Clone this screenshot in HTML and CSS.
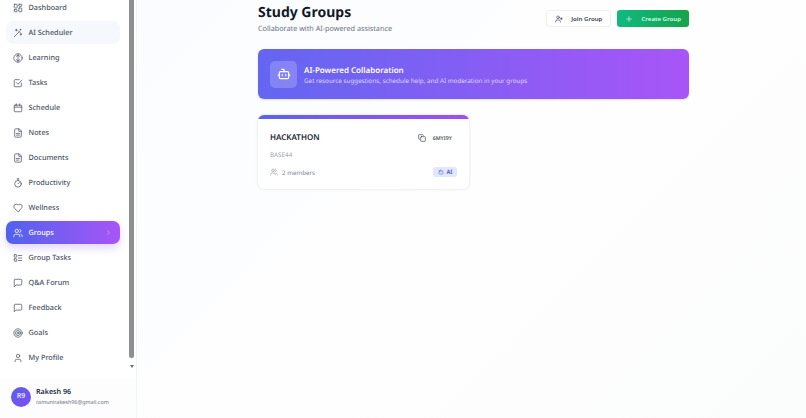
FILE: index.html
```html
<!DOCTYPE html>
<html lang="en">
<head>
    <meta charset="UTF-8">
    <meta name="viewport" content="width=device-width, initial-scale=1.0">
    <title>Study Groups</title>
    <link rel="stylesheet" href="styles.css">
</head>
<body>
    <div class="app">
        <aside class="sidebar">
            <div class="nav-wrap">
                <nav class="nav">
                    <a class="nav-item"><svg class="nav-icon" viewBox="0 0 24 24"><rect x="3" y="3" width="7" height="9" rx="1"/><rect x="14" y="3" width="7" height="5" rx="1"/><rect x="14" y="12" width="7" height="9" rx="1"/><rect x="3" y="16" width="7" height="5" rx="1"/></svg>Dashboard</a>
                    <a class="nav-item soft"><svg class="nav-icon" viewBox="0 0 24 24"><path d="M3 21 15 9"/><path d="m13 7 4 4"/><path d="M8 3v4M6 5h4M19 13v4M17 15h4M18 3v2M17 4h2"/></svg>AI Scheduler</a>
                    <a class="nav-item"><svg class="nav-icon" viewBox="0 0 24 24"><circle cx="12" cy="12" r="10"/><path d="M12 2v20M8 8l4-3 4 3M8 16l4 3 4-3"/></svg>Learning</a>
                    <a class="nav-item"><svg class="nav-icon" viewBox="0 0 24 24"><path d="M20 12v7a2 2 0 0 1-2 2H5a2 2 0 0 1-2-2V6a2 2 0 0 1 2-2h10"/><path d="m8 11 4 4 9-10"/></svg>Tasks</a>
                    <a class="nav-item"><svg class="nav-icon" viewBox="0 0 24 24"><rect x="3" y="5" width="18" height="16" rx="2"/><path d="M8 2v5M16 2v5M3 10h18"/></svg>Schedule</a>
                    <a class="nav-item"><svg class="nav-icon" viewBox="0 0 24 24"><path d="M14 2H6a2 2 0 0 0-2 2v16a2 2 0 0 0 2 2h12a2 2 0 0 0 2-2V8z"/><path d="M14 2v6h6M8 13h8M8 17h8"/></svg>Notes</a>
                    <a class="nav-item"><svg class="nav-icon" viewBox="0 0 24 24"><path d="M14 2H6a2 2 0 0 0-2 2v16a2 2 0 0 0 2 2h12a2 2 0 0 0 2-2V8z"/><path d="M14 2v6h6M8 13h8M8 17h6"/></svg>Documents</a>
                    <a class="nav-item"><svg class="nav-icon" viewBox="0 0 24 24"><circle cx="12" cy="14" r="8"/><path d="M10 2h4M12 14l3-3M12 2v4"/></svg>Productivity</a>
                    <a class="nav-item"><svg class="nav-icon" viewBox="0 0 24 24"><path d="M19 14c1.500-1.500 3-3.200 3-5.500A5.500 5.500 0 0 0 16.500 3c-1.800 0-3 .5-4.500 2-1.500-1.500-2.700-2-4.500-2A5.500 5.500 0 0 0 2 8.500c0 2.300 1.500 4 3 5.500l7 7z"/></svg>Wellness</a>
                    <a class="nav-item active"><svg class="nav-icon" viewBox="0 0 24 24"><path d="M16 21v-2a4 4 0 0 0-4-4H6a4 4 0 0 0-4 4v2"/><circle cx="9" cy="7" r="4"/><path d="M22 21v-2a4 4 0 0 0-3-3.900M16 3.100a4 4 0 0 1 0 7.800"/></svg>Groups<svg class="nav-chevron" viewBox="0 0 24 24"><path d="m9 6 6 6-6 6"/></svg></a>
                    <a class="nav-item"><svg class="nav-icon" viewBox="0 0 24 24"><rect x="3" y="4" width="6" height="6" rx="1"/><rect x="3" y="14" width="6" height="6" rx="1"/><path d="M13 6h8M13 12h8M13 18h8"/></svg>Group Tasks</a>
                    <a class="nav-item"><svg class="nav-icon" viewBox="0 0 24 24"><path d="M21 15a2 2 0 0 1-2 2H7l-4 4V5a2 2 0 0 1 2-2h14a2 2 0 0 1 2 2z"/></svg>Q&amp;A Forum</a>
                    <a class="nav-item"><svg class="nav-icon" viewBox="0 0 24 24"><path d="M21 15a2 2 0 0 1-2 2H7l-4 4V5a2 2 0 0 1 2-2h14a2 2 0 0 1 2 2z"/></svg>Feedback</a>
                    <a class="nav-item"><svg class="nav-icon" viewBox="0 0 24 24"><circle cx="12" cy="12" r="10"/><circle cx="12" cy="12" r="6"/><circle cx="12" cy="12" r="2"/></svg>Goals</a>
                    <a class="nav-item"><svg class="nav-icon" viewBox="0 0 24 24"><path d="M19 21v-2a4 4 0 0 0-4-4H9a4 4 0 0 0-4 4v2"/><circle cx="12" cy="7" r="4"/></svg>My Profile</a>
                </nav>
                <div class="scroll-thumb"></div>
                <div class="scroll-arrow"></div>
            </div>
            <div class="user">
                <div class="avatar">R9</div>
                <div>
                    <div class="user-name">Rakesh 96</div>
                    <div class="user-mail">ramunirakesh96@gmail.com</div>
                </div>
            </div>
        </aside>
        <main class="main">
            <div class="content">
                <header class="page-head">
                    <div>
                        <h1>Study Groups</h1>
                        <p>Collaborate with AI-powered assistance</p>
                    </div>
                    <div class="actions">
                        <button class="btn btn-light"><svg viewBox="0 0 24 24"><path d="M16 21v-2a4 4 0 0 0-4-4H6a4 4 0 0 0-4 4v2"/><circle cx="9" cy="7" r="4"/><path d="M19 8v6M16 11h6"/></svg>Join Group</button>
                        <button class="btn btn-green"><svg viewBox="0 0 24 24"><path d="M5 12h14M12 5v14"/></svg>Create Group</button>
                    </div>
                </header>
                <section class="banner">
                    <div class="banner-icon"><svg viewBox="0 0 24 24"><path d="M12 8V4H8"/><rect x="4" y="8" width="16" height="12" rx="2"/><path d="M2 14h2M20 14h2M15 13v2M9 13v2"/></svg></div>
                    <div class="banner-text">
                        <h2>AI-Powered Collaboration</h2>
                        <p>Get resource suggestions, schedule help, and AI moderation in your groups</p>
                    </div>
                </section>
                <article class="card">
                    <div class="card-body">
                        <div class="card-top">
                            <h3>HACKATHON</h3>
                            <div class="code"><svg viewBox="0 0 24 24"><rect x="8" y="8" width="14" height="14" rx="2"/><path d="M4 16a2 2 0 0 1-2-2V4a2 2 0 0 1 2-2h10a2 2 0 0 1 2 2"/></svg>6MYI9Y</div>
                        </div>
                        <div class="card-desc">BASE44</div>
                        <div class="card-foot">
                            <div class="members"><svg viewBox="0 0 24 24"><path d="M16 21v-2a4 4 0 0 0-4-4H6a4 4 0 0 0-4 4v2"/><circle cx="9" cy="7" r="4"/><path d="M22 21v-2a4 4 0 0 0-3-3.900M16 3.100a4 4 0 0 1 0 7.800"/></svg>2 members</div>
                            <div class="badge"><svg viewBox="0 0 24 24"><path d="M12 8V4H8"/><rect x="4" y="8" width="16" height="12" rx="2"/></svg>AI</div>
                        </div>
                    </div>
                </article>
            </div>
        </main>
    </div>
</body>
</html>
```

FILE: styles.css
```css
* {
    box-sizing: border-box;
}
html, body {
    margin: 0;
    padding: 0;
    height: 100%;
    overflow: hidden;
}
body {
    font-family: "Noto Sans", Arial, sans-serif;
    text-rendering: geometricPrecision;
    color: #111827;
    background: #fff;
}
svg {
    fill: none;
    stroke: currentColor;
    stroke-width: 2;
    stroke-linecap: round;
    stroke-linejoin: round;
    flex-shrink: 0;
}
h1, h2, h3, p {
    margin: 0;
}
.app {
    display: flex;
    height: 418px;
}

/* sidebar */
.sidebar {
    width: 137px;
    display: flex;
    flex-direction: column;
    background: #fff;
    border-right: 1px solid #f1f3f6;
}
.nav-wrap {
    position: relative;
    height: 378px;
    overflow: hidden;
}
.nav {
    display: flex;
    flex-direction: column;
    gap: 2px;
    margin-top: -4px;
    padding: 0 16px 0 6px;
}
.nav-item {
    display: flex;
    align-items: center;
    height: 23px;
    padding: 0 7px;
    border-radius: 7px;
    font-size: 7.300px;
    font-weight: 500;
    color: #4b5563;
}
.nav-icon {
    width: 10px;
    height: 10px;
    margin-right: 5.500px;
    stroke-width: 1.800;
}
.nav-item.soft {
    background: #f5f8fc;
}
.nav-item.active {
    color: #fff;
    background: linear-gradient(90deg, #4f62ee, #a855f7);
    box-shadow: 0 4px 8px rgba(139, 92, 246, 0.25);
}
.nav-chevron {
    width: 7px;
    height: 7px;
    margin-left: auto;
    margin-right: 1px;
    opacity: 0.7;
}
.scroll-thumb {
    position: absolute;
    top: 0;
    left: 129px;
    width: 5px;
    height: 358px;
    background: #8f8f8f;
    border-radius: 0 0 2px 2px;
}
.scroll-arrow {
    position: absolute;
    top: 365px;
    left: 130px;
    border-left: 2px solid transparent;
    border-right: 2px solid transparent;
    border-top: 3px solid #6b6b6b;
}
.user {
    display: flex;
    align-items: center;
    gap: 5px;
    height: 40px;
    padding: 0 11px 3px;
    background: #fdfdfe;
}
.avatar {
    width: 20px;
    height: 20px;
    border-radius: 50%;
    display: flex;
    align-items: center;
    justify-content: center;
    background: linear-gradient(135deg, #5b5ff0, #7c4ff0);
    color: #e8e6fd;
    font-size: 7px;
    font-weight: 600;
}
.user-name {
    font-size: 7.100px;
    font-weight: 600;
    line-height: 11px;
    color: #1f2937;
}
.user-mail {
    font-size: 5.400px;
    line-height: 8px;
    color: #6b7280;
}

/* main */
.main {
    flex: 1;
    padding: 0 117px 0 121px;
    background: linear-gradient(135deg, #fafcff, #fefeff 50%, #fbfcfc);
}
.page-head {
    display: flex;
    justify-content: space-between;
    height: 49px;
    padding-top: 3px;
}
.page-head h1 {
    font-size: 14px;
    font-weight: 700;
    line-height: 20px;
    color: #111827;
}
.page-head p {
    font-size: 7.250px;
    line-height: 12px;
    color: #6b7280;
}
.actions {
    display: flex;
    gap: 6px;
    margin-top: 7px;
}
.btn {
    display: flex;
    align-items: center;
    height: 17px;
    padding: 0 8px;
    border-radius: 3px;
    border: 0;
    font-family: inherit;
    font-size: 6.100px;
    font-weight: 600;
}
.btn svg {
    width: 8px;
    height: 8px;
    margin-right: 8px;
}
.btn-light {
    background: #fff;
    color: #374151;
    border: 1px solid #eef0f3;
}
.btn-green {
    background: linear-gradient(90deg, #10b981, #16a34a);
    color: #dffbed;
}
.banner {
    display: flex;
    align-items: center;
    gap: 7px;
    height: 50px;
    padding: 0 12px;
    border-radius: 6px;
    color: #fff;
    background: linear-gradient(90deg, #6366f1, #a855f7);
    box-shadow: 0 1px 2px rgba(99, 102, 241, 0.2);
}
.banner-icon {
    width: 27px;
    height: 27px;
    border-radius: 5px;
    display: flex;
    align-items: center;
    justify-content: center;
    background: rgba(255, 255, 255, 0.2);
}
.banner-icon svg {
    width: 14px;
    height: 14px;
}
.banner-text {
    padding-top: 2px;
}
.banner h2 {
    font-size: 8px;
    font-weight: 600;
    line-height: 11px;
}
.banner p {
    font-size: 6.300px;
    line-height: 10px;
    color: #dcd4fb;
}
.card {
    width: 211px;
    height: 74px;
    margin-top: 16px;
    padding-top: 4px;
    border-radius: 6px;
    background: linear-gradient(90deg, #5b63ec, #a04ff0) top / 100% 4px no-repeat, #fff;
    box-shadow: 0 0 3px rgba(17, 24, 39, 0.15);
}
.card-body {
    padding: 12px 12px 0;
}
.card-top {
    display: flex;
    justify-content: space-between;
    align-items: center;
    height: 13px;
}
.card h3 {
    font-size: 8px;
    font-weight: 600;
    color: #1f2937;
}
.code {
    display: flex;
    align-items: center;
    gap: 6.500px;
    margin-right: 5px;
    font-size: 5.300px;
    font-weight: 600;
    color: #4b5563;
}
.code svg {
    width: 8px;
    height: 8px;
    color: #374151;
}
.card-desc {
    margin-top: 6px;
    font-size: 6.300px;
    line-height: 10px;
    color: #9ca3af;
}
.card-foot {
    display: flex;
    justify-content: space-between;
    align-items: center;
    margin-top: 7px;
}
.members {
    display: flex;
    align-items: center;
    gap: 4px;
    font-size: 6.200px;
    color: #7b8494;
}
.members svg {
    width: 8px;
    height: 8px;
    color: #9ca3af;
}
.badge {
    display: flex;
    align-items: center;
    gap: 2.500px;
    height: 10px;
    padding: 0 4.500px;
    border-radius: 3px;
    background: #e0e7ff;
    color: #4f5bd5;
    font-size: 5.800px;
    font-weight: 600;
}
.badge svg {
    width: 6px;
    height: 6px;
}
```
